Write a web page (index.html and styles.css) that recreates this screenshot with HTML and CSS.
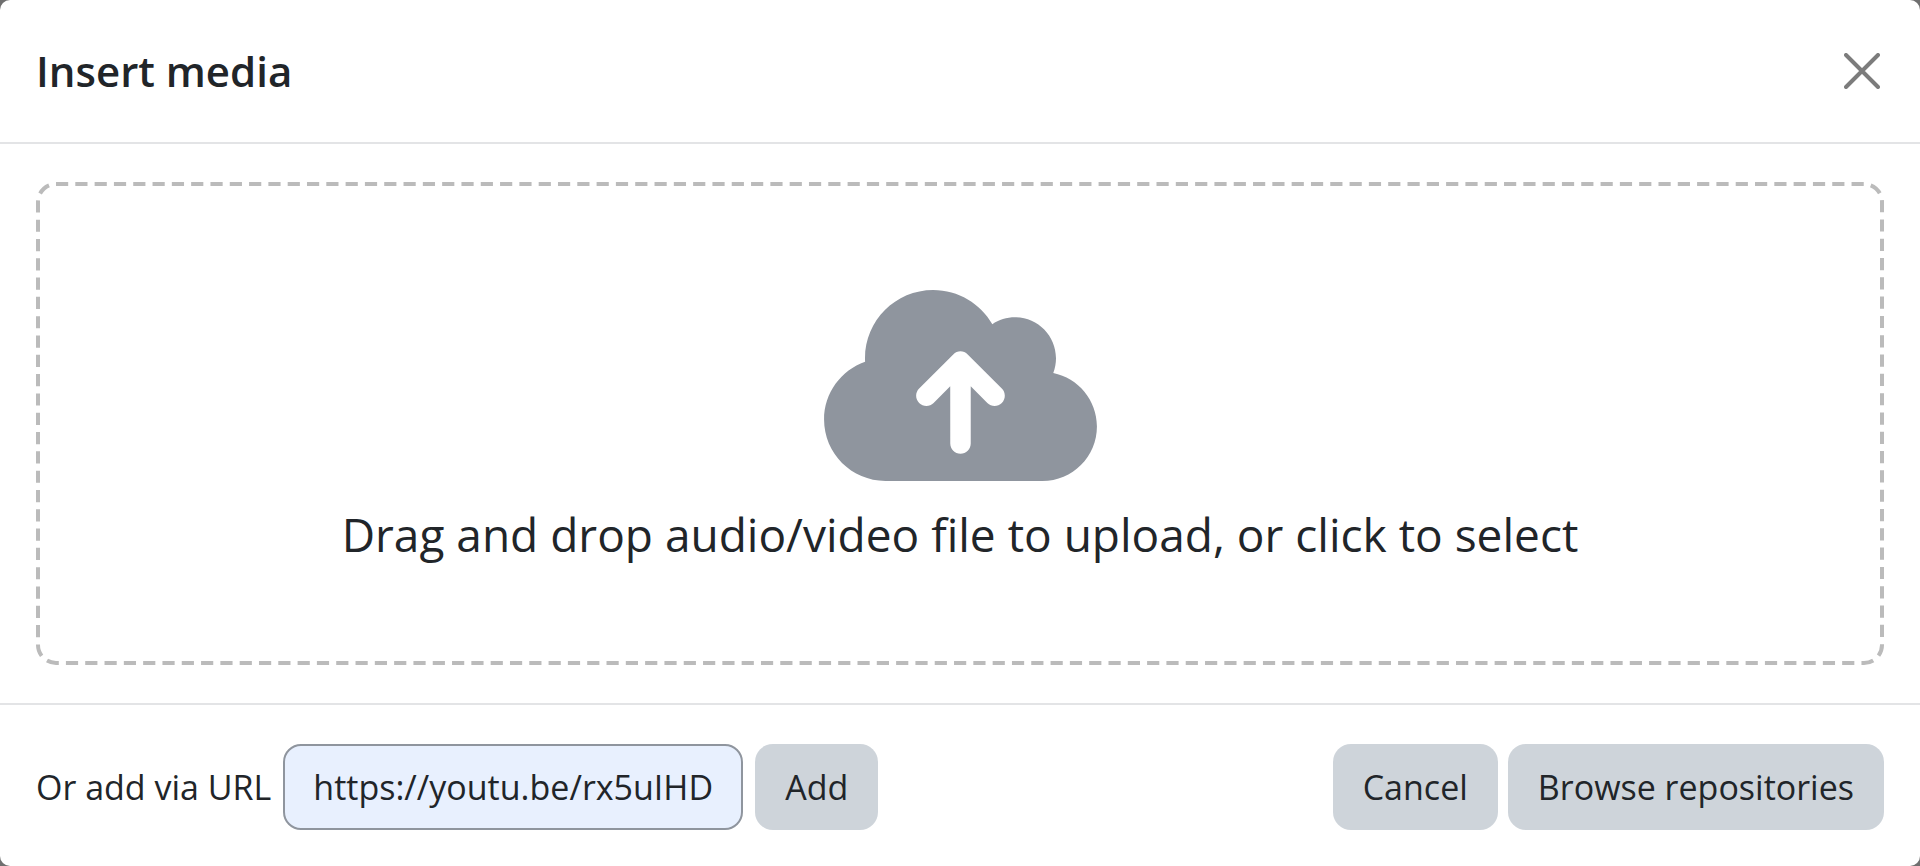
FILE: index.html
```html
<!DOCTYPE html>
<html lang="en">
<head>
  <meta charset="UTF-8" />
  <meta name="viewport" content="width=device-width, initial-scale=1" />
  <title>Insert media</title>
  <link rel="stylesheet" href="styles.css">
</head>
<body>

  <div class="modal" role="dialog" aria-labelledby="modalTitle">
    <header class="modal-header">
      <h1 class="modal-title" id="modalTitle">Insert media</h1>
      <button type="button" class="btn-close" aria-label="Close">
        <svg viewBox="0 0 36 36" aria-hidden="true">
          <path d="M2 2L34 34M34 2L2 34" />
        </svg>
      </button>
    </header>

    <main class="modal-body">
      <button type="button" class="dropzone">
        <svg class="dropzone-outline" aria-hidden="true">
          <rect rx="18" pathLength="4541" />
        </svg>
        <svg class="dropzone-icon" viewBox="0 32 640 448" aria-hidden="true">
          <path d="M144 480C64.500 480 0 415.500 0 336c0-62.800 40.200-116.200 96.200-135.900c-.1-2.700-.2-5.400-.2-8.100c0-88.400 71.600-160 160-160c59.300 0 111 32.200 138.700 80.200C409.900 102 428.300 96 448 96c53 0 96 43 96 96c0 12.200-2.300 23.800-6.400 34.600C596 238.400 640 290.100 640 352c0 70.700-57.300 128-128 128L144 480zm79-217c-9.400 9.400-9.400 24.600 0 33.900s24.600 9.400 33.900 0l39-39L296 392c0 13.300 10.700 24 24 24s24-10.700 24-24l0-134.100 39 39c9.400 9.400 24.600 9.400 33.900 0s9.400-24.600 0-33.900l-80-80c-9.400-9.400-24.600-9.400-33.900 0l-80 80z" />
        </svg>
        <span class="dropzone-text">Drag and drop audio/video file to upload, or click to select</span>
      </button>
    </main>

    <footer class="modal-footer">
      <form class="url-form">
        <label for="urlInput">Or add via URL</label>
        <input type="text" class="url-input" id="urlInput" value="https://youtu.be/rx5uIHD" autocomplete="off" />
        <button type="button" class="btn">Add</button>
      </form>
      <div class="actions">
        <button type="button" class="btn">Cancel</button>
        <button type="button" class="btn">Browse repositories</button>
      </div>
    </footer>
  </div>

</body>
</html>
```

FILE: styles.css
```css
* {
  box-sizing: border-box;
}

body {
  margin: 0;
  background: #6f6f6f;
  color: #212529;
  font-family: "Segoe UI", "Open Sans", sans-serif;
  font-size: 34px;
  line-height: 50px;
}

button,
input {
  font: inherit;
  color: inherit;
}

button {
  cursor: pointer;
}

.modal {
  display: flex;
  flex-direction: column;
  min-height: 100vh;
  background: #fff;
  border-radius: 10px;
}

.modal-header {
  display: flex;
  align-items: center;
  justify-content: space-between;
  padding: 36px;
  border-bottom: 2px solid #e3e4e6;
}

.modal-title {
  margin: 0;
  font-size: 42px;
  font-weight: 600;
  line-height: 70px;
}

.btn-close {
  display: flex;
  padding: 4px;
  border: none;
  background: none;
}

.btn-close svg {
  width: 36px;
  height: 36px;
  fill: none;
  stroke: #7c7c7c;
  stroke-width: 4;
  stroke-linecap: round;
}

.modal-body {
  display: flex;
  flex: 1;
  padding: 38px 36px;
}

.dropzone {
  position: relative;
  display: flex;
  flex: 1;
  flex-direction: column;
  align-items: center;
  justify-content: center;
  gap: 18px;
  padding: 48px 36px 36px;
  border: none;
  background: none;
}

/* border-style: dashed has no control over the dash length */
.dropzone-outline {
  position: absolute;
  inset: 0;
  width: 100%;
  height: 100%;
}

.dropzone-outline rect {
  x: 2px;
  y: 2px;
  width: calc(100% - 4px);
  height: calc(100% - 4px);
  fill: none;
  stroke: #bbb;
  stroke-width: 4;
  stroke-dasharray: 12 7;
}

.dropzone-icon {
  width: 273px;
  height: 191px;
  fill: #8f959e;
}

.dropzone-text {
  font-size: 46px;
  line-height: 70px;
}

.modal-footer {
  display: flex;
  align-items: center;
  justify-content: space-between;
  padding: 39px 36px 36px;
  border-top: 2px solid #e3e4e6;
}

.url-form,
.actions {
  display: flex;
  align-items: center;
  gap: 10px;
}

.url-form {
  gap: 12px;
}

.url-input {
  width: 460px;
  padding: 16px 28px;
  border: 2px solid #8f959e;
  border-radius: 18px;
  background: #e8f0fe;
}

.btn {
  padding: 18px 30px;
  border: none;
  border-radius: 18px;
  background: #ced4da;
}
```
